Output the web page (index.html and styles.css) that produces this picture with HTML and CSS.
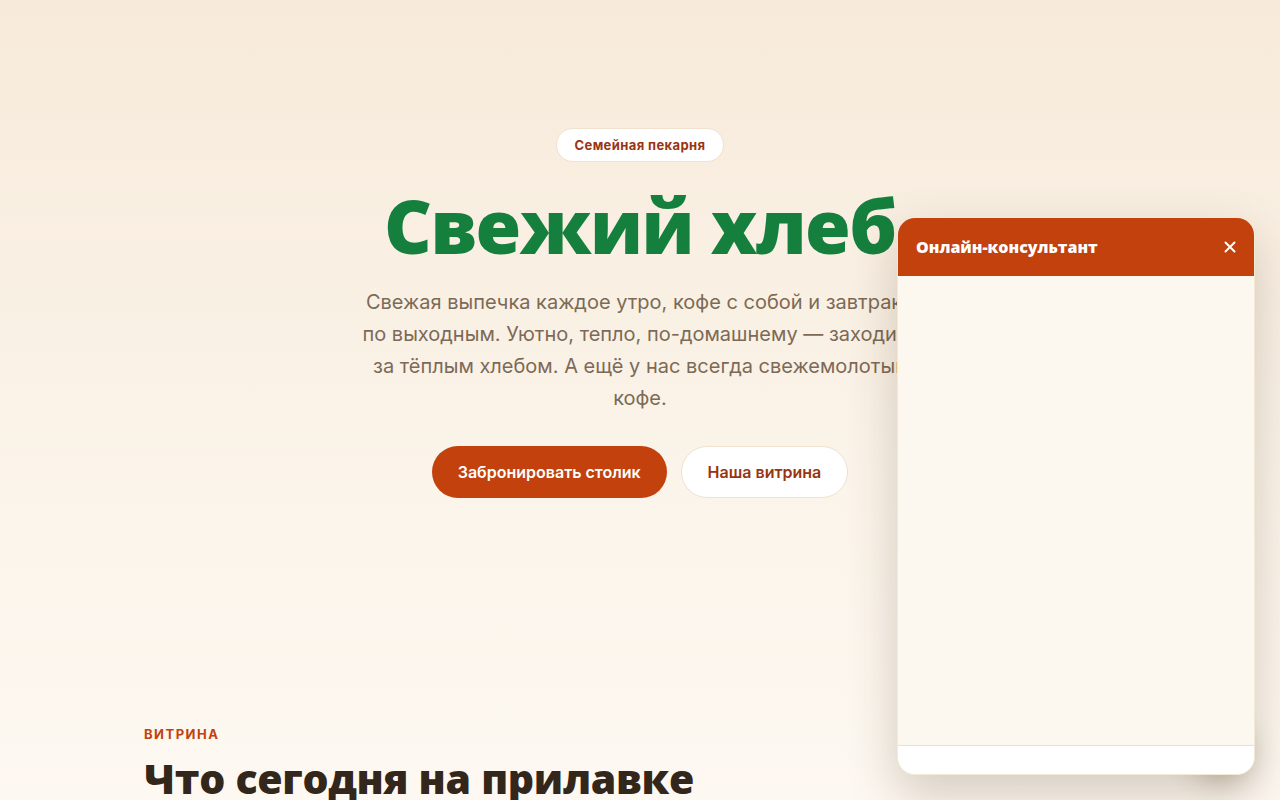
FILE: index.html
```html
<!DOCTYPE html>
<html lang="ru">
<head>
<meta charset="utf-8">
<title>Семейная пекарня</title>
<link rel="stylesheet" href="styles.css">
</head>
<body>
<main class="page">
  <section class="hero">
    <span class="badge">Семейная пекарня</span>
    <h1 class="hero-title">Свежий хлеб</h1>
    <p class="hero-text">Свежая выпечка каждое утро, кофе с собой и завтраки по выходным. Уютно, тепло, по-домашнему — заходите за тёплым хлебом. А ещё у нас всегда свежемолотый кофе.</p>
    <div class="hero-actions">
      <a class="btn btn-primary" href="#">Забронировать столик</a>
      <a class="btn btn-secondary" href="#">Наша витрина</a>
    </div>
  </section>
  <section class="showcase">
    <div class="container">
      <div class="eyebrow">Витрина</div>
      <h2 class="section-title">Что сегодня на прилавке</h2>
    </div>
  </section>
</main>

<div class="launcher"></div>
<aside class="chat">
  <header class="chat-head">
    <span class="chat-title">Онлайн-консультант</span>
    <button class="chat-close" aria-label="Закрыть">
      <svg width="12" height="12" viewBox="0 0 12 12"><path d="M1.5 1.5l9 9M10.5 1.5l-9 9" stroke="#fff" stroke-width="2" stroke-linecap="round"/></svg>
    </button>
  </header>
  <div class="chat-body"></div>
  <div class="chat-foot"></div>
</aside>
</body>
</html>
```
FILE: styles.css
```css
* { box-sizing: border-box; }
html, body { margin: 0; padding: 0; }
body {
  font-family: Inter, "Noto Sans", sans-serif;
  background: linear-gradient(180deg, #f7eada 0%, #fbf4ea 60%, #fdf8f1 100%);
  min-height: 800px;
  overflow: hidden;
  color: #2f2418;
}
.page { height: 800px; overflow: hidden; }
.hero {
  display: flex;
  flex-direction: column;
  align-items: center;
  text-align: center;
  padding-top: 128px;
  height: 690px;
}
.badge {
  display: inline-block;
  background: #fff;
  border: 1px solid #f1e2cf;
  border-radius: 999px;
  padding: 8px 17px;
  font-size: 13px;
  font-weight: 700;
  letter-spacing: 0.4px;
  color: #9a3412;
  line-height: 16px;
}
.hero-title {
  margin: 16px 0 0;
  font-family: "Open Sans", sans-serif;
  font-weight: 800;
  font-size: 74px;
  line-height: 96px;
  color: #15803d;
  letter-spacing: -1.5px;
}
.hero-text {
  margin: 12px 0 0;
  max-width: 560px;
  font-size: 20px;
  line-height: 32px;
  color: #7c6a56;
}
.hero-actions {
  display: flex;
  gap: 14px;
  margin-top: 32px;
}
.btn {
  display: inline-flex;
  align-items: center;
  justify-content: center;
  height: 52px;
  border-radius: 999px;
  font-size: 16px;
  font-weight: 600;
  text-decoration: none;
  padding: 0 26px;
}
.btn-primary { background: #c2410c; color: #fff; }
.btn-secondary { background: #fff; color: #9a3412; border: 1px solid #efe2d0; }
.container { max-width: 992px; margin: 0 auto; }
.eyebrow {
  font-size: 13px;
  font-weight: 700;
  letter-spacing: 1.5px;
  text-transform: uppercase;
  color: #c2410c;
  line-height: 16px;
  margin-top: 36px;
}
.section-title {
  margin: 8px 0 0;
  font-family: "Open Sans", sans-serif;
  font-weight: 800;
  font-size: 41px;
  line-height: 56px;
  color: #33261a;
  letter-spacing: -0.3px;
}
.launcher {
  position: fixed;
  right: 30px;
  bottom: 30px;
  width: 56px;
  height: 56px;
  border-radius: 50%;
  background: #c2410c;
  box-shadow: 0 12px 28px rgba(80, 50, 20, 0.3);
}
.chat {
  position: fixed;
  right: 25px;
  bottom: 25px;
  width: 358px;
  height: 558px;
  border-radius: 18px;
  overflow: hidden;
  background: #fdf8ef;
  border: 1px solid #f3ead6;
  box-shadow: 0 20px 50px rgba(70, 45, 20, 0.22);
  display: flex;
  flex-direction: column;
}
.chat-head {
  height: 58px;
  flex: none;
  background: #c2410c;
  display: flex;
  align-items: center;
  justify-content: space-between;
  padding: 0 16px 0 18px;
}
.chat-title {
  font-family: "Open Sans", sans-serif;
  font-weight: 800;
  font-size: 16px;
  color: #fff;
}
.chat-close {
  background: none;
  border: 0;
  padding: 0;
  width: 16px;
  height: 16px;
  display: flex;
  align-items: center;
  justify-content: center;
  cursor: pointer;
}
.chat-body { flex: 1; background: #fdf8ef; }
.chat-foot {
  height: 29px;
  flex: none;
  background: #fff;
  border-top: 1px solid #e6e1d0;
}
```
